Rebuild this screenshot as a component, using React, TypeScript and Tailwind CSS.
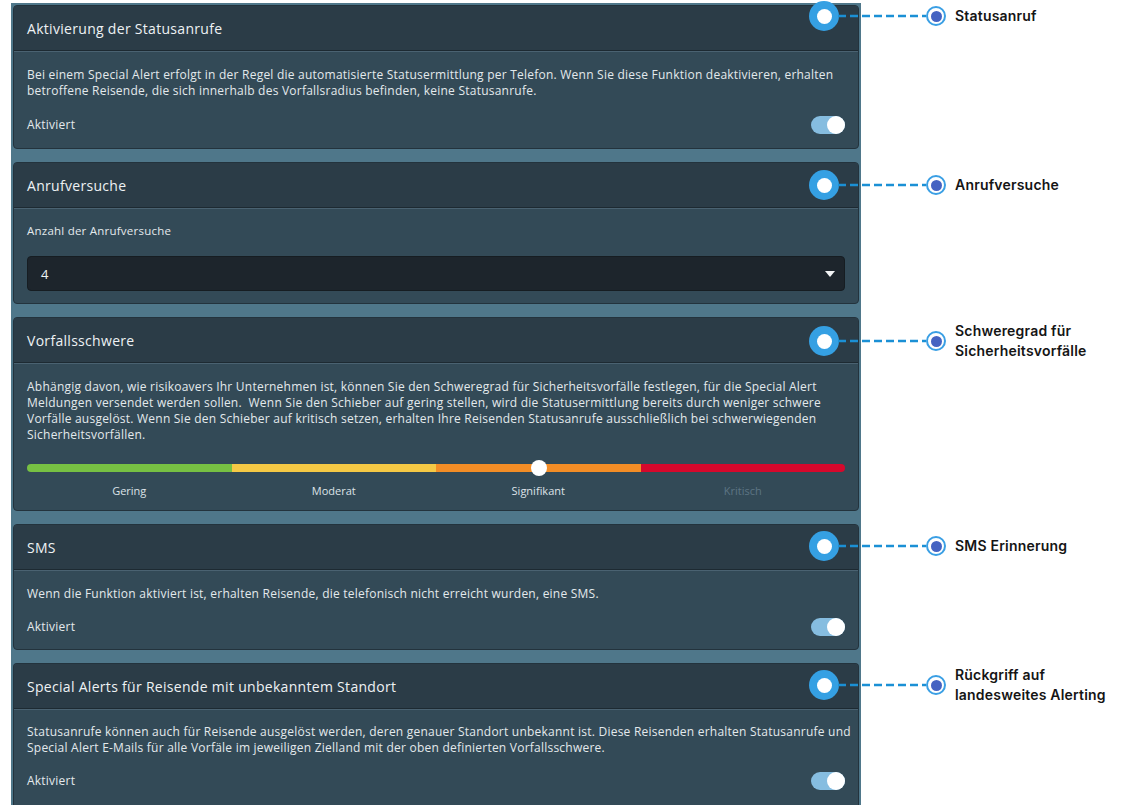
import { ReactNode } from 'react'

const font = { fontFamily: '"Open Sans", "Noto Sans", sans-serif' }

function Toggle() {
    return (
        <div className="relative h-[18px] w-[34px] rounded-full bg-[#86bde0]">
            <div className="absolute right-0 top-0 h-[18px] w-[18px] rounded-full bg-white" />
        </div>
    )
}

function Card({ title, children, last }: { title: string; children: ReactNode; last?: boolean }) {
    return (
        <div className={`overflow-hidden border border-[#23333d] bg-[#334a57] ${last ? 'rounded-t border-b-0' : 'rounded'}`}>
            <div className="flex h-[45px] items-center border-b border-[#1d2a32] bg-[#2b3c47] px-[13px] text-[14px] tracking-[0.3px] text-[#eef2f4]">
                {title}
            </div>
            <div className="border-t border-[#4a6271] px-[13px] text-[12px] leading-[16px] tracking-[0.23px] text-[#e3e9ec]">
                {children}
            </div>
        </div>
    )
}

function ActiveRow() {
    return (
        <div className="flex h-[18px] items-center justify-between">
            <span>Aktiviert</span>
            <Toggle />
        </div>
    )
}

function Annotation({ top, label }: { top: number; label: ReactNode }) {
    return (
        <div className="absolute left-[809px] flex h-[30px] items-center" style={{ top: top - 15 }}>
            <div className="flex h-[30px] w-[30px] items-center justify-center rounded-full bg-[#35a0e3]">
                <div className="h-[15px] w-[15px] rounded-full bg-white" />
            </div>
            <svg width="88" height="4" className="-ml-px">
                <line x1="0" y1="2" x2="88" y2="2" stroke="#1b90d5" strokeWidth="2.5" strokeDasharray="8 4" />
            </svg>
            <div className="flex h-[20px] w-[20px] items-center justify-center rounded-full border-2 border-[#3a9fe4] bg-white">
                <div className="h-[11px] w-[11px] rounded-full bg-[#4563c2]" />
            </div>
            <div
                className="ml-[9px] text-[14px] font-semibold leading-[20px] tracking-[0.2px] text-[#151515]"
                style={{ fontFamily: 'Inter, "Noto Sans", sans-serif' }}
            >
                {label}
            </div>
        </div>
    )
}

const levels = [
    { label: 'Gering', color: 'bg-[#77c143]', text: 'text-[#dde3e7]' },
    { label: 'Moderat', color: 'bg-[#f5c945]', text: 'text-[#dde3e7]' },
    { label: 'Signifikant', color: 'bg-[#f38d26]', text: 'text-[#dde3e7]' },
    { label: 'Kritisch', color: 'bg-[#d6082c]', text: 'text-[#5d7584]' },
]

export default function App() {
    return (
        <div className="relative h-[811px] w-[1129px] overflow-hidden bg-white" style={font}>
            <div className="ml-[11px] mt-[3px] h-[802px] w-[850px] overflow-hidden bg-[#4f778a] px-[2px] pt-[2px]">
                <div className="flex flex-col gap-[13px]">
                    <Card title="Aktivierung der Statusanrufe">
                        <div className="pb-[14px] pt-[15px]">
                            <p className="whitespace-nowrap">
                                Bei einem Special Alert erfolgt in der Regel die automatisierte Statusermittlung per Telefon. Wenn Sie diese Funktion deaktivieren, erhalten
                                <br />
                                betroffene Reisende, die sich innerhalb des Vorfallsradius befinden, keine Statusanrufe.
                            </p>
                            <div className="mt-[17px]">
                                <ActiveRow />
                            </div>
                        </div>
                    </Card>

                    <Card title="Anrufversuche">
                        <div className="pb-[12px] pt-[14px]">
                            <p className="text-[11.5px]">Anzahl der Anrufversuche</p>
                            <div className="mt-[17px] flex h-[35px] items-center justify-between rounded border border-[#161d22] bg-[#1d252c] pl-[13px] pr-[9px] text-[13px] text-[#eef2f4]">
                                <span>4</span>
                                <svg width="10" height="6" viewBox="0 0 10 6">
                                    <path d="M0 0 L10 0 L5 6 Z" fill="#f2f4f5" />
                                </svg>
                            </div>
                        </div>
                    </Card>

                    <Card title="Vorfallsschwere">
                        <div className="pb-[11px] pt-[15px]">
                            <p className="whitespace-nowrap">
                                Abhängig davon, wie risikoavers Ihr Unternehmen ist, können Sie den Schweregrad für Sicherheitsvorfälle festlegen, für die Special Alert
                                <br />
                                Meldungen versendet werden sollen.&nbsp; Wenn Sie den Schieber auf gering stellen, wird die Statusermittlung bereits durch weniger schwere
                                <br />
                                Vorfälle ausgelöst. Wenn Sie den Schieber auf kritisch setzen, erhalten Ihre Reisenden Statusanrufe ausschließlich bei schwerwiegenden
                                <br />
                                Sicherheitsvorfällen.
                            </p>
                            <div className="relative mt-[21px] flex h-[8px] overflow-hidden rounded-full">
                                {levels.map((l) => (
                                    <div key={l.label} className={`flex-1 ${l.color}`} />
                                ))}
                            </div>
                            <div className="relative -mt-[4px] h-0">
                                <div className="absolute left-[504px] top-[-8px] h-[16px] w-[16px] rounded-full bg-white" />
                            </div>
                            <div className="mt-[15px] flex text-[11px] tracking-normal">
                                {levels.map((l) => (
                                    <div key={l.label} className={`flex-1 text-center ${l.text}`}>
                                        {l.label}
                                    </div>
                                ))}
                            </div>
                        </div>
                    </Card>

                    <Card title="SMS">
                        <div className="pb-[13px] pt-[15px]">
                            <p>Wenn die Funktion aktiviert ist, erhalten Reisende, die telefonisch nicht erreicht wurden, eine SMS.</p>
                            <div className="mt-[16px]">
                                <ActiveRow />
                            </div>
                        </div>
                    </Card>

                    <Card title="Special Alerts für Reisende mit unbekanntem Standort" last>
                        <div className="pb-[15px] pt-[14px]">
                            <p className="whitespace-nowrap">
                                Statusanrufe können auch für Reisende ausgelöst werden, deren genauer Standort unbekannt ist. Diese Reisenden erhalten Statusanrufe und
                                <br />
                                Special Alert E-Mails für alle Vorfäle im jeweiligen Zielland mit der oben definierten Vorfallsschwere.
                            </p>
                            <div className="mt-[16px]">
                                <ActiveRow />
                            </div>
                        </div>
                    </Card>
                </div>
            </div>

            <Annotation top={16} label="Statusanruf" />
            <Annotation top={185} label="Anrufversuche" />
            <Annotation
                top={341}
                label={
                    <>
                        Schweregrad für
                        <br />
                        Sicherheitsvorfälle
                    </>
                }
            />
            <Annotation top={546} label="SMS Erinnerung" />
            <Annotation
                top={685}
                label={
                    <>
                        Rückgriff auf
                        <br />
                        landesweites Alerting
                    </>
                }
            />
        </div>
    )
}
